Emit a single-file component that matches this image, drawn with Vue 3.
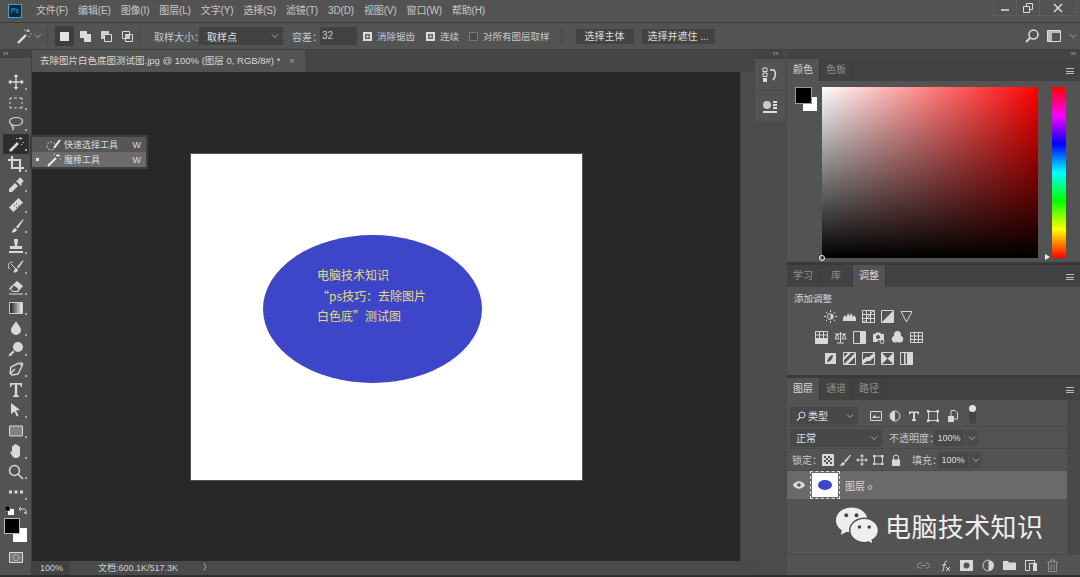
<template>
  <div class="app">
    <!-- menu -->
    <header class="menubar">
      <div class="ps-logo">Ps</div>
      <nav class="menus">
        <span v-for="m in menus" :key="m">{{ m }}</span>
      </nav>
      <div class="win-btns">
        <span class="win-btn"><svg width="12" height="12" viewBox="0 0 12 12"><path d="M2 8h8" stroke="#ddd" stroke-width="1.6" /></svg></span>
        <span class="win-btn"><svg width="12" height="12" viewBox="0 0 12 12"><path d="M1.5 4.5h6v6h-6zM4.5 4.5v-3h6v6h-3" fill="none" stroke="#ddd" /></svg></span>
        <span class="win-btn wide"><svg width="12" height="12" viewBox="0 0 12 12"><path d="M2 2l8 8M10 2l-8 8" stroke="#ddd" stroke-width="1.5" /></svg></span>
      </div>
    </header>

    <!-- options -->
    <section class="options">
      <svg class="opt-wand" width="16" height="16" viewBox="0 0 16 16"><path d="M2 15l8-8" stroke="#ddd" stroke-width="2.4" /><path d="M12 1v3M10 3h4M14.500 6h1M8 2h1M13 8v1" stroke="#ddd" /></svg>
      <svg class="chev" width="8" height="8" viewBox="0 0 8 8"><path d="M1 2.500l3 3 3-3" fill="none" stroke="#aaa" /></svg>
      <i class="sep"></i>
      <div class="mode-btns">
        <span class="mode active"><b class="sq"></b></span>
        <span class="mode"><svg width="13" height="13" viewBox="0 0 13 13"><path d="M1 1h7v3h4v8H5V8H1z" fill="#ddd" /></svg></span>
        <span class="mode"><svg width="13" height="13" viewBox="0 0 13 13"><path d="M1 1h8v3H4v5H1z" fill="#ccc" /><path d="M4.500 4.500h7v7h-7z" fill="none" stroke="#ddd" /></svg></span>
        <span class="mode"><svg width="13" height="13" viewBox="0 0 13 13"><path d="M1.500 1.500h7v7h-7zM4.500 4.500h7v7h-7z" fill="none" stroke="#ddd" /><path d="M4.500 4.500h4v4h-4z" fill="#ccc" /></svg></span>
      </div>
      <i class="sep sep-b"></i>
      <span class="label sample-label">取样大小：</span>
      <span class="select sample-select">取样点<svg class="chev" width="8" height="8" viewBox="0 0 8 8"><path d="M1 2.500l3 3 3-3" fill="none" stroke="#aaa" /></svg></span>
      <span class="label tol-label">容差：</span>
      <span class="num-input">32</span>
      <label class="check first"><b class="box on"></b><span class="chk-text w1">消除锯齿</span></label>
      <label class="check"><b class="box on"></b><span class="chk-text w2">连续</span></label>
      <label class="check"><b class="box"></b><span class="chk-text">对所有图层取样</span></label>
      <i class="sep sep-c"></i>
      <span class="opt-btn subject">选择主体</span>
      <span class="opt-btn mask">选择并遮住 ...</span>
      <div class="opt-right">
        <svg width="16" height="16" viewBox="0 0 16 16"><circle cx="9.500" cy="6.500" r="4.500" fill="none" stroke="#ddd" stroke-width="1.500" /><path d="M6 10l-4 4" stroke="#ddd" stroke-width="1.800" /></svg>
        <svg class="layout-ic" width="14" height="12" viewBox="0 0 14 12"><path d="M.5.500h13v11H.5z" fill="none" stroke="#ddd" /><path d="M1 1h13v2H1zM1 3h4v8H1z" fill="#ddd" opacity=".75" /></svg>
        <svg class="chev" width="8" height="8" viewBox="0 0 8 8"><path d="M1 2.500l3 3 3-3" fill="none" stroke="#aaa" /></svg>
      </div>
    </section>

    <div class="workspace">
      <!-- tools -->
      <aside class="tools">
        <div class="grip">››</div>
        <div class="tool-list">
          <span v-for="t in tools" :key="t.name" class="tool" :class="{ active: t.active }">
            <span v-if="t.gradient" class="gradient-ic"></span>
            <svg v-else width="16" height="16" viewBox="0 0 16 16">
              <path v-if="t.f" :d="t.f" fill="#d8d8d8" :fill-opacity="t.fo || 1" />
              <path v-if="t.s" :d="t.s" fill="none" stroke="#d8d8d8" :stroke-width="t.w || 1" />
            </svg>
            <i class="corner"></i>
          </span>
        </div>
        <div class="swap-row">
          <svg width="9" height="9" viewBox="0 0 9 9"><path d="M3 3h6v6H3z" fill="#fff" /><path d="M0 0h5v5H0z" fill="#000" stroke="#ddd" stroke-width=".5" /></svg>
          <svg width="9" height="9" viewBox="0 0 9 9"><path d="M1 3l2-2M1 3l2 2M1 3h5c1 0 2 1 2 2v3M8 8L6 6M8 8l2-2" fill="none" stroke="#ddd" /></svg>
        </div>
        <div class="swatches">
          <span class="swatch-bg"></span>
          <span class="swatch-fg"></span>
        </div>
        <svg class="quickmask" width="14" height="11" viewBox="0 0 14 11"><path d="M.5.500h13v10H.5z" fill="#777" stroke="#ddd" /><circle cx="7" cy="5.500" r="3" fill="none" stroke="#ddd" stroke-dasharray="1.500 1" /></svg>
      </aside>

      <!-- flyout for the wand slot -->
      <div class="flyout">
        <div class="fly-row">
          <svg width="16" height="14" viewBox="0 0 16 14"><circle cx="5" cy="8" r="4" fill="none" stroke="#ddd" stroke-dasharray="2 1.500" /><path d="M8 10l6-8" stroke="#eee" stroke-width="2" /></svg>
          <span>快速选择工具</span><em>W</em>
        </div>
        <div class="fly-row current">
          <b class="dot"></b>
          <svg width="16" height="14" viewBox="0 0 16 14"><path d="M2 13l8-8" stroke="#eee" stroke-width="2" /><path d="M12 1v3M10 2.500h4M14 6h1M8 1h1" stroke="#eee" /></svg>
          <span>魔棒工具</span><em>W</em>
        </div>
      </div>

      <!-- document -->
      <main class="doc-area">
        <div class="tabbar">
          <div class="doc-tab">去除图片白色底图测试图.jpg @ 100% (图层 0, RGB/8#) * <span class="tab-x">×</span></div>
        </div>
        <div class="canvas-row">
          <div class="canvas">
            <div class="photo">
              <div class="ellipse">
                <p>电脑技术知识</p>
                <p>“ps技巧：去除图片</p>
                <p>白色底”测试图</p>
              </div>
            </div>
          </div>
          <div class="v-scroll"></div>
        </div>
        <footer class="status">
          <span class="zoom-val">100%</span>
          <span class="doc-info">文档:600.1K/517.3K</span>
          <span class="status-arrow">〉</span>
        </footer>
      </main>

      <!-- collapsed strip -->
      <div class="strip">
        <div class="grip right">‹‹</div>
        <div class="strip-btn">
          <svg width="16" height="16" viewBox="0 0 16 16"><path d="M1 1h4v3.500H1zM1 6h4v3.500H1z" fill="none" stroke="#ddd" /><path d="M1 11h4v4H1z" fill="#ddd" /><path d="M8 3h4c2 2 2 7-1 10" fill="none" stroke="#ddd" stroke-width="1.500" /></svg>
        </div>
        <div class="strip-btn">
          <svg width="16" height="14" viewBox="0 0 16 14"><circle cx="5" cy="5" r="4" fill="#ccc" /><path d="M11 1h4v2h-4zM11 4h4v2h-4zM11 7h4v2h-4zM1 11h14v2H1z" fill="#ddd" /></svg>
        </div>
      </div>

      <!-- panels -->
      <div class="dock">
        <div class="grip dock-grip">››</div>

        <section class="panel color-panel">
          <div class="panel-tabs">
            <span class="ptab on">颜色</span><span class="ptab">色板</span>
            <span class="ham"></span>
          </div>
          <div class="color-body">
            <div class="fg-bg">
              <span class="bg-chip"></span>
              <span class="fg-chip"></span>
            </div>
            <div class="sv-field"><i class="sv-pin"></i></div>
            <div class="hue-bar"><i class="hue-pin"></i></div>
          </div>
        </section>

        <section class="panel adjust-panel">
          <div class="panel-tabs">
            <span class="ptab">学习</span><span class="ptab">库</span><span class="ptab on">调整</span>
            <span class="ham"></span>
          </div>
          <div class="adjust-title">添加调整</div>
          <div v-for="(row, i) in adjustRows" :key="i" class="adjust-row" :class="{ wider: i === 1 }">
            <span v-for="(ic, j) in row" :key="j" class="adj-ic">
              <svg width="13" height="13" viewBox="0 0 13 13">
                <path v-if="ic.f" :d="ic.f" fill="#d8d8d8" />
                <path v-if="ic.s" :d="ic.s" fill="none" stroke="#d8d8d8" />
              </svg>
            </span>
          </div>
        </section>

        <section class="panel layers-panel">
          <div class="panel-tabs">
            <span class="ptab on">图层</span><span class="ptab">通道</span><span class="ptab">路径</span>
            <span class="ham"></span>
          </div>
          <div class="layer-main">
            <div class="layer-content">
              <div class="lrow">
                <span class="dark-select filter-sel">
                  <span class="filter-text">
                    <svg width="10" height="10" viewBox="0 0 10 10"><circle cx="6" cy="4" r="3" fill="none" stroke="#ddd" /><path d="M4 6.500L1 9.500" stroke="#ddd" stroke-width="1.200" /></svg>
                    类型
                  </span>
                  <svg class="chev" width="8" height="8" viewBox="0 0 8 8"><path d="M1 2.500l3 3 3-3" fill="none" stroke="#aaa" /></svg>
                </span>
                <div class="filter-icons">
                  <svg v-for="(ic, k) in filterIcons" :key="k" width="12" height="12" viewBox="0 0 12 12"><path :d="ic.f" fill="#d8d8d8" /><path v-if="ic.s" :d="ic.s" fill="none" stroke="#d8d8d8" /></svg>
                </div>
                <span class="toggle"><i></i></span>
              </div>
              <div class="lrow">
                <span class="dark-select blend-sel">正常<svg class="chev" width="8" height="8" viewBox="0 0 8 8"><path d="M1 2.500l3 3 3-3" fill="none" stroke="#aaa" /></svg></span>
                <span class="llabel opacity-label">不透明度：</span>
                <span class="pct">100%</span>
                <span class="pct-chev"><svg width="8" height="8" viewBox="0 0 8 8"><path d="M1 2.500l3 3 3-3" fill="none" stroke="#aaa" /></svg></span>
              </div>
              <div class="lrow">
                <span class="llabel lock-label">锁定：</span>
                <div class="lock-icons">
                  <svg v-for="(ic, k) in lockIcons" :key="k" width="12" height="12" viewBox="0 0 12 12"><path v-if="ic.f" :d="ic.f" fill="#d8d8d8" /><path v-if="ic.s" :d="ic.s" fill="none" stroke="#d8d8d8" /></svg>
                </div>
                <span class="llabel fill-label">填充：</span>
                <span class="pct">100%</span>
                <span class="pct-chev"><svg width="8" height="8" viewBox="0 0 8 8"><path d="M1 2.500l3 3 3-3" fill="none" stroke="#aaa" /></svg></span>
              </div>
              <div class="layer-row">
                <svg class="eye" width="12" height="8" viewBox="0 0 12 8"><path d="M0 4c3-5 9-5 12 0-3 5-9 5-12 0z" fill="#ddd" /><circle cx="6" cy="4" r="1.800" fill="#555" /></svg>
                <span class="thumb"><i></i></span>
                <span class="layer-name">图层 <small>0</small></span>
              </div>
              <div class="layer-empty"></div>
            </div>
            <div class="layer-scroll"></div>
          </div>
          <div class="layers-foot">
            <svg v-for="(ic, k) in footIcons" :key="k" class="foot-ic" :class="{ dim: ic.dim }" width="13" height="13" viewBox="0 0 13 13"><path v-if="ic.f" :d="ic.f" fill="#d8d8d8" /><path v-if="ic.s" :d="ic.s" fill="none" stroke="#d8d8d8" /></svg>
          </div>

          <!-- watermark sits on top of the empty layer area -->
          <div class="watermark">
            <svg width="43" height="38" viewBox="0 0 44 38">
              <path d="M16 0C7 0 0 6 0 13c0 4 2 8 6 10l-1 5 6-3c2 .5 3 .7 5 .7 9 0 16-6 16-13S25 0 16 0z" fill="#eee" />
              <path d="M29 11c-8 0-15 5.500-15 12.500S21 36 29 36c1.500 0 3-.2 4.300-.6L38 38l-1-4.500c4-2.300 6.500-6 6.500-10C43.500 16.500 37 11 29 11z" fill="#eee" stroke="#4f4f4f" stroke-width="1.500" />
              <circle cx="10.500" cy="8" r="2" fill="#444" /><circle cx="21" cy="8" r="2" fill="#444" />
              <circle cx="24" cy="20" r="1.800" fill="#444" /><circle cx="34" cy="20" r="1.800" fill="#444" />
            </svg>
            <span>电脑技术知识</span>
          </div>
        </section>
      </div>
    </div>
    <div class="bottom-line"></div>
  </div>
</template>

<script setup>
const menus = ['文件(F)', '编辑(E)', '图像(I)', '图层(L)', '文字(Y)', '选择(S)', '滤镜(T)', '3D(D)', '视图(V)', '窗口(W)', '帮助(H)']

// f = filled path, s = stroked path, w = stroke width, fo = fill opacity
const tools = [
  { name: 'move', f: 'M8 0l2.500 3h-5zM8 16l-2.500-3h5zM0 8l3-2.500v5zM16 8l-3 2.500v-5z', s: 'M8 2v12M2 8h12', w: 1.4 },
  { name: 'marquee', s: 'M2 3h2M6 3h3M11 3h3v2M14 7v2M14 11v2h-3M9 13H6M4 13H2v-2M2 9V7M2 5V3', w: 1 },
  { name: 'lasso', s: 'M8 2.500c4 0 6.500 1.500 6.500 4s-3 4-6.500 4-6.500-1.500-6.500-4 3-4 6.500-4zM4 10c-1 1 0 2 1 2s1 2-1 3', w: 1.2 },
  { name: 'wand', active: true, s: 'M2 15l8-8', w: 2.6, f: 'M12 1h.8v2.500H12zM10.500 2h4v.8h-4zM14.500 6h1.200v1h-1.200zM8 2h1v1H8zM13 8h1v1h-1z' },
  { name: 'crop', s: 'M4 0v12h12M0 4h12v12', w: 2 },
  { name: 'eyedropper', f: 'M10.500 1.500a2 2 0 0 1 3 0l1 1a2 2 0 0 1 0 3L13 7l1 1-1 1-5-5 1-1 1 1zM7 6l3 3-6 6H1v-3z' },
  { name: 'heal', f: 'M10.500 1L15 5.500 5.500 15 1 10.500zM8 6v1h1V6zm2 2v1h1V8zM6 8v1h1V8zm2 2v1h1v-1z' },
  { name: 'brush', f: 'M15 1l-7 8 2 1.500L15.500 2zM7 10c-2 .5-2 3-4 4.500 3 .5 6-1 6-3z' },
  { name: 'stamp', f: 'M6 1h4v2c0 2-1 3-1 5h5v3H2V8h5c0-2-1-3-1-5zM1 13h14v2H1z' },
  { name: 'history', f: 'M15 1l-6 7 1.500 1.500L15.500 2zM8 9c-2 .5-1 3-3 4 2 1 5 0 5-2.500z', s: 'M3 5l6 6M1.500 10a4 4 0 0 1 3-7', w: 1 },
  { name: 'eraser', f: 'M9 2l6 5-5 6H5L1 9.500zM5 12h4l1.500-2L6 6.500 3 10z', s: 'M1 15h14', w: 1 },
  { name: 'gradient', gradient: true },
  { name: 'blur', f: 'M8 1c2 4 5 6 5 9a5 5 0 0 1-10 0c0-3 3-5 5-9z' },
  { name: 'dodge', f: 'M10 1a5 5 0 1 1 0 10 5 5 0 0 1 0-10zM5 9.500l1.500 1.500L2 15.500 .5 14z' },
  { name: 'pen', s: 'M11 2L3 6 2 12l2 2 6-1 4-8zM2 13l5-5M13 1l2 3', w: 1.4 },
  { name: 'type', f: 'M2 1h12v4h-1c0-1.500-1-2.500-3-2.500H9.200v10.500L11 14v1H5v-1l1.800-1V2.500H6C4 2.500 3 3.500 3 5H2z' },
  { name: 'select', f: 'M3 1l9 7-4 .5 2.500 5-1.800 1L6.500 9.500 3 12z' },
  { name: 'shape', f: 'M1.500 3h13v10h-13z', fo: 0.35, s: 'M1.500 3h13v10h-13z', w: 1 },
  { name: 'hand', f: 'M4 8V3.500a1 1 0 0 1 2 0V7V2a1 1 0 0 1 2 0v5V2.500a1 1 0 0 1 2 0V7V4a1 1 0 0 1 2 0v7c0 3-2 4-4 4-3 0-4-2-5.500-5-.5-1 1-2 2-1z' },
  { name: 'zoom', s: 'M6.500 1.500a5 5 0 1 1 0 10 5 5 0 0 1 0-10zM10 10l5 5', w: 1.5 },
  { name: 'more', f: 'M1 6.500h3v3H1zM6.500 6.500h3v3h-3zM12 6.500h3v3h-3z' }
]

const adjustRows = [
  [
    { f: 'M6.500 3.500a3 3 0 0 1 0 6z', s: 'M6.500 3.500a3 3 0 0 0 0 6M6.500 0v2M6.500 11v2M0 6.500h2M11 6.500h2M2 2l1.300 1.300M9.700 9.700L11 11M2 11l1.300-1.300M9.700 3.300L11 2' },
    { f: 'M0 11V8l2-3 1.500 2L5 3l1.500 3L8 3l2 4 1-2 2 3v3z' },
    { s: 'M.5.500h12v12H.5zM.5 4.500h12M.5 8.500h12M4.500.500v12M8.500.500v12M1 12C6 11 7 2 12 1' },
    { f: 'M1 12L12 1v11z', s: 'M.5.500h12v12H.5z' },
    { s: 'M1 1.500h11L6.500 12z' }
  ],
  [
    { f: 'M1 7h11v5H1z', s: 'M.5.500h12v12H.5zM.5 4h12M4.500.500V7M8.500.500V7' },
    { s: 'M6.500 1v11M3 12h7M1 3h11M3 3L1 8h4zM10 3L8 8h4z' },
    { f: 'M7 1h5v11H7z', s: 'M.5.500h12v12H.5z' },
    { f: 'M1 3h2l1-1.500h4L9 3h3v6H7.500A3 3 0 0 0 5 11H1zM6 4a2 2 0 1 0 0 4 2 2 0 0 0 0-4z', s: 'M10 8.500a2 2 0 1 0 0 4 2 2 0 0 0 0-4z' },
    { f: 'M6.500 0a3.500 3.500 0 0 1 3.300 4.700 3.500 3.500 0 1 1-3.300 6A3.500 3.500 0 1 1 3.200 4.700 3.500 3.500 0 0 1 6.500 0z' },
    { s: 'M.5 1.500h12v10H.5zM.5 5h12M.5 8.500h12M4.500 1.500v10M8.500 1.500v10' }
  ],
  [
    { f: 'M1 1h11v11H1zM9 3C6 3 4 6 3 10c3 0 6-3 6-7z' },
    { f: 'M1 12L12 1v4l-7 7zM1 8l7-7H5L1 5z', s: 'M.5.500h12v12H.5z' },
    { f: 'M1 8l3-3h3l5-4v4L8 9H5l-4 3z', s: 'M.5.500h12v12H.5z' },
    { f: 'M1 1l5.500 5.500L12 1v11L6.500 6.500 1 12z', s: 'M.5.500h12v12H.5z' },
    { f: 'M7 1h5v11H7zM4 1h1.500v11H4z', s: 'M.5.500h12v12H.5z' }
  ]
]

const filterIcons = [
  { f: 'M2 8l2.500-3L7 7.500 8.500 6 10 8z', s: 'M.5 1.500h11v9H.5z' },
  { f: 'M6 1v10A5 5 0 0 1 6 1z', s: 'M6 1a5 5 0 1 0 0 10A5 5 0 0 0 6 1z' },
  { f: 'M1 1.500h10v3h-1c0-1-.5-1.500-2-1.500H7v6l1 .5V11H4v-1.500L5 9V3H4C2.500 3 2 3.500 2 4.500H1z' },
  { f: 'M0 0h2.500v2.500H0zM9.500 0H12v2.500H9.500zM0 9.500h2.500V12H0zM9.500 9.500H12V12H9.500z', s: 'M2 1.500h8M2 10.500h8M1.500 2v8M10.500 2v8' },
  { f: 'M2 6h6v6H2z', s: 'M5 6V.5h4l2.500 2.500v6H8' }
]

const lockIcons = [
  { f: 'M0 0h12v12H0zM2 2v2h2V2zm4 0v2h2V2zM4 4v2h2V4zm4 0v2h2V4zM2 6v2h2V6zm4 0v2h2V6zM4 8v2h2V8zm4 0v2h2V8z' },
  { f: 'M11.500 .5L5 7l1.500 1.500L12 1.500zM4 8c-1.500.5-1 2.500-3.500 3.500 3 1 5.500-.5 5.500-2z' },
  { f: 'M6 0l2 2.500H4zM6 12L4 9.500h4zM0 6l2.500-2v4zM12 6L9.500 8V4z', s: 'M6 2v8M2 6h8' },
  { f: 'M0 1h2.500v2.500H0zM0 8.500h2.500V11H0zM8 1h2.500v2.500H8zM8 8.500h2.500V11H8z', s: 'M2 2h6M2 10h6M1.500 3v5M9.500 3v5' },
  { f: 'M2 5.500h8V12H2z', s: 'M3.500 5.500V3.500a2.500 2.500 0 0 1 5 0v2' }
]

const footIcons = [
  { dim: true, s: 'M5 4H3a2.500 2.500 0 0 0 0 5h2M8 4h2a2.500 2.500 0 0 1 0 5H8M4 6.500h5' },
  { s: 'M3 12c2 0 1.500-2 2-5s1-5 3-5M3 6h4M7 8l4 4M11 8l-4 4' },
  { f: 'M0 1h13v11H0zM6.500 3.500a3 3 0 1 0 0 6 3 3 0 0 0 0-6z' },
  { f: 'M6.500 1a5.500 5.500 0 0 1 0 11z', s: 'M6.500 1a5.500 5.500 0 0 0 0 11' },
  { f: 'M0 2h5l1 1.500h7V11H0z' },
  { f: 'M8 4h4v8H8z', s: 'M.5 1.500h9v3H4.500v7H.5z' },
  { dim: true, s: 'M1 3h11M4.500 3V1h4v2M2.500 3v9.500h8V3M5 5v6M8 5v6' }
]
</script>

<style scoped>
.app {
  width: 1080px;
  height: 577px;
  display: flex;
  flex-direction: column;
  overflow: hidden;
  position: relative;
  background: #535353;
  color: #d0d0d0;
  font-family: "Liberation Sans", "Noto Sans CJK SC", sans-serif;
  font-size: 10px;
}

.menubar {
  height: 22px;
  display: flex;
  align-items: center;
  flex-shrink: 0;
  border-bottom: 1px solid #3a3a3a;
  box-sizing: content-box;
}
.ps-logo {
  width: 12px;
  height: 12px;
  margin-left: 8px;
  background: #0b2b3c;
  border: 1px solid #31a8c8;
  color: #31a8ff;
  font-size: 7px;
  line-height: 12px;
  text-align: center;
}
.menus {
  display: flex;
  align-items: baseline;
  gap: 10px;
  margin-left: 14px;
  color: #c8c8c8;
  letter-spacing: -0.15px;
  line-height: 14px;
}
.win-btns {
  margin-left: auto;
  height: 15px;
  align-self: flex-start;
  display: flex;
  border: 1px solid #5f5f5f;
  border-top: 0;
  margin-right: 3px;
}
.win-btn {
  width: 23px;
  box-sizing: border-box;
  display: flex;
  align-items: center;
  justify-content: center;
  border-right: 1px solid #5f5f5f;
}
.win-btn.wide {
  width: 36px;
  border-right: 0;
}

.options {
  height: 26px;
  display: flex;
  align-items: center;
  flex-shrink: 0;
  border-bottom: 1px solid #3f3f3f;
  color: #c8c8c8;
}
.label { white-space: nowrap; }
.opt-wand { margin-left: 16px; }
.chev { flex-shrink: 0; }
.options > .chev { margin-left: 2px; }
.sep {
  width: 1px;
  height: 18px;
  margin-left: 5px;
  background: #474747;
}
.mode-btns {
  display: flex;
  margin-left: 7px;
  gap: 2px;
}
.mode {
  width: 19px;
  height: 20px;
  display: flex;
  align-items: center;
  justify-content: center;
}
.mode.active { background: #3d3d3d; }
.sq {
  width: 9px;
  height: 9px;
  background: #e4e4e4;
}
.sep-b { margin-left: 2px; }
.sample-label { margin-left: 14px; width: 45px; }
.select {
  display: flex;
  align-items: center;
  justify-content: space-between;
  box-sizing: border-box;
  height: 18px;
  background: #424242;
  padding: 0 4px 0 8px;
}
.sample-select { width: 84px; color: #e0e0e0; }
.tol-label { margin-left: 9px; width: 28px; }
.num-input {
  width: 37px;
  height: 18px;
  background: #424242;
  line-height: 18px;
  padding-left: 2px;
  box-sizing: border-box;
}
.check {
  display: flex;
  align-items: center;
  gap: 5px;
  margin-left: 11px;
}
.check.first { margin-left: 6px; }
.chk-text {
  font-size: 9.500px;
  white-space: nowrap;
}
.chk-text.w1 { width: 38px; }
.chk-text.w2 { width: 18px; }
.box {
  width: 9px;
  height: 9px;
  box-sizing: border-box;
  border: 1px solid #777;
  background: #4a4a4a;
}
.box.on {
  background: #dcdcdc;
  border: 2px solid #dcdcdc;
  box-shadow: inset 0 0 0 1.5px #666;
}
.sep-c { margin-left: 11px; }
.opt-btn {
  height: 15px;
  line-height: 15px;
  background: #434343;
  text-align: center;
  color: #dcdcdc;
  white-space: nowrap;
}
.subject { width: 58px; margin-left: 14px; }
.mask { width: 73px; margin-left: 8px; }
.opt-right {
  margin-left: auto;
  margin-right: 3px;
  display: flex;
  align-items: center;
}
.layout-ic { margin-left: 7px; }
.opt-right .chev { margin-left: 8px; }

.workspace {
  flex: 1;
  min-height: 0;
  display: flex;
  position: relative;
}

.tools {
  width: 32px;
  flex-shrink: 0;
  display: flex;
  flex-direction: column;
  align-items: center;
  background: #535353;
  border-right: 1px solid #404040;
  box-sizing: border-box;
}
.grip {
  height: 8px;
  width: 100%;
  line-height: 7px;
  font-size: 8px;
  color: #bbb;
  padding-left: 3px;
  background: #434343;
  box-sizing: border-box;
}
.tool-list {
  margin-top: 14px;
  width: 100%;
  display: flex;
  flex-direction: column;
  align-items: center;
}
.tool {
  position: relative;
  width: 26px;
  height: 20.500px;
  display: flex;
  align-items: center;
  justify-content: center;
}
.tool.active { background: #2e2e2e; }
.corner {
  position: absolute;
  right: 2px;
  bottom: 3px;
  width: 2px;
  height: 2px;
  background: #aaa;
}
.gradient-ic {
  width: 14px;
  height: 12px;
  background: linear-gradient(to right, #222, #eee);
  border: 1px solid #ccc;
  box-sizing: border-box;
}
.swap-row {
  width: 22px;
  display: flex;
  justify-content: space-between;
  margin-top: 3px;
}
.swatches {
  position: relative;
  width: 23px;
  height: 24px;
  margin-top: 3px;
}
.swatch-bg {
  position: absolute;
  right: 0;
  bottom: 0;
  width: 14px;
  height: 14px;
  background: #fff;
}
.swatch-fg {
  position: absolute;
  left: 0;
  top: 0;
  width: 14px;
  height: 14px;
  background: #000;
  border: 1px solid #bbb;
}
.quickmask { margin-top: 10px; }

.flyout {
  position: absolute;
  left: 30px;
  top: 85px;
  width: 118px;
  height: 34px;
  padding: 2px;
  box-sizing: border-box;
  background: #3c3c3c;
  z-index: 2;
  color: #ddd;
  font-size: 9px;
}
.fly-row {
  height: 15px;
  display: flex;
  align-items: center;
  padding: 0 5px 0 14px;
  background: #565656;
  position: relative;
}
.fly-row.current { background: #6b6b6b; }
.fly-row span { margin-left: 2px; }
.fly-row em {
  margin-left: auto;
  font-style: normal;
}
.dot {
  position: absolute;
  left: 4px;
  top: 6px;
  width: 3px;
  height: 3px;
  background: #eee;
}

.doc-area {
  width: 723px;
  flex-shrink: 0;
  display: flex;
  flex-direction: column;
}
.tabbar {
  height: 22px;
  flex-shrink: 0;
  background: #454545;
  display: flex;
}
.doc-tab {
  width: 273px;
  padding-left: 8px;
  box-sizing: border-box;
  background: #535353;
  line-height: 22px;
  white-space: nowrap;
  color: #d8d8d8;
  font-size: 9.500px;
}
.tab-x {
  margin-left: 6px;
  color: #aaa;
}
.canvas-row {
  flex: 1;
  min-height: 0;
  display: flex;
}
.canvas {
  flex: 1;
  background: #282828;
  padding: 82px 0 0 159px;
}
.photo {
  width: 391px;
  height: 326px;
  background: #fff;
  display: flex;
  align-items: center;
  justify-content: center;
  padding: 0 28px 16px 0;
  box-sizing: border-box;
  box-shadow: 0 0 0 1px #555;
}
.ellipse {
  width: 219px;
  height: 148px;
  border-radius: 50%;
  background: #3d46c8;
  box-sizing: border-box;
  padding: 30px 0 0 54px;
  color: #e8dc74;
  font-family: "Noto Sans CJK SC", sans-serif;
  font-size: 12px;
  line-height: 20.500px;
}
.ellipse p { margin: 0; white-space: nowrap; }
.v-scroll {
  width: 15px;
  flex-shrink: 0;
  background: #4b4b4b;
  border-left: 1px solid #444;
  box-sizing: border-box;
}
.status {
  height: 14px;
  flex-shrink: 0;
  display: flex;
  align-items: center;
  background: #4a4a4a;
  line-height: 14px;
  font-size: 9px;
}
.zoom-val {
  width: 38px;
  padding-left: 8px;
  background: #424242;
  box-sizing: border-box;
}
.doc-info {
  margin-left: 28px;
  width: 105px;
}
.status-arrow { font-size: 8px; }

.strip {
  width: 32px;
  flex-shrink: 0;
  box-sizing: border-box;
  padding-right: 2px;
  background: #4b4b4b;
}
.grip.right {
  padding-left: 18px;
  height: 9px;
}
.strip-btn {
  height: 31px;
  margin-bottom: 1px;
  background: #535353;
  display: flex;
  align-items: center;
  justify-content: center;
}

.dock {
  flex: 1;
  min-width: 0;
  display: flex;
  flex-direction: column;
  background: #3a3a3a;
}
.dock-grip {
  height: 9px;
  text-align: right;
  padding-right: 4px;
}
.panel {
  background: #535353;
  display: flex;
  flex-direction: column;
}
.panel-tabs {
  height: 22px;
  flex-shrink: 0;
  display: flex;
  align-items: stretch;
  background: #424242;
  color: #8f8f8f;
}
.ptab {
  width: 33px;
  box-sizing: border-box;
  line-height: 22px;
  text-align: center;
  border-right: 1px solid #3c3c3c;
}
.ptab.on {
  background: #535353;
  color: #d8d8d8;
}
.ham {
  margin: 9px 6px 0 auto;
  width: 8px;
  height: 4px;
  border-top: 1px solid #bbb;
  border-bottom: 1px solid #bbb;
  background: linear-gradient(#bbb, #bbb) center / 100% 1px no-repeat;
}

.color-panel { height: 203px; }
.color-body {
  flex: 1;
  display: flex;
  align-items: flex-start;
  padding: 6px 0 0 8px;
}
.fg-bg {
  position: relative;
  width: 22px;
  height: 24px;
  flex-shrink: 0;
}
.bg-chip {
  position: absolute;
  right: 0;
  bottom: 0;
  width: 14px;
  height: 14px;
  background: #fff;
}
.fg-chip {
  position: absolute;
  left: 0;
  top: 0;
  width: 15px;
  height: 15px;
  background: #000;
  border: 1px solid #9a9a9a;
}
.sv-field {
  position: relative;
  width: 216px;
  height: 171px;
  margin-left: 5px;
  background:
    linear-gradient(to bottom, rgba(0, 0, 0, 0), #000),
    linear-gradient(to right, #fff, #f00);
}
.sv-pin {
  position: absolute;
  left: -3px;
  bottom: -3px;
  width: 6px;
  height: 6px;
  border-radius: 50%;
  border: 1px solid #fff;
  box-sizing: border-box;
}
.hue-bar {
  position: relative;
  width: 14px;
  height: 171px;
  margin-left: 14px;
  background: linear-gradient(to bottom, #f00, #f0f, #00f, #0ff, #0f0, #ff0, #f00);
}
.hue-pin {
  position: absolute;
  left: -7px;
  bottom: -2px;
  border-left: 5px solid #eee;
  border-top: 3px solid transparent;
  border-bottom: 3px solid transparent;
}

.adjust-panel {
  height: 110px;
  margin-top: 3px;
}
.adjust-title {
  margin: 5px 0 0 7px;
  color: #d8d8d8;
  line-height: 14px;
  font-size: 9.500px;
}
.adjust-row {
  height: 21px;
  padding-left: 34px;
  display: flex;
  align-items: center;
}
.adjust-row.wider { padding-left: 25px; }
.adj-ic {
  width: 19px;
  display: flex;
  justify-content: center;
}

.layers-panel {
  flex: 1;
  min-height: 0;
  margin-top: 3px;
  position: relative;
}
.layer-main {
  flex: 1;
  min-height: 0;
  display: flex;
}
.layer-content {
  flex: 1;
  min-width: 0;
  display: flex;
  flex-direction: column;
  padding-top: 5px;
}
.layer-scroll {
  width: 13px;
  flex-shrink: 0;
  background: #4a4a4a;
}
.lrow {
  height: 22px;
  flex-shrink: 0;
  display: flex;
  align-items: center;
  padding-left: 3px;
  color: #c8c8c8;
  border-bottom: 1px solid #4b4b4b;
  box-sizing: border-box;
}
.dark-select {
  height: 18px;
  background: #484848;
  border-radius: 2px;
  display: flex;
  align-items: center;
  justify-content: space-between;
  padding: 0 4px 0 6px;
  box-sizing: border-box;
  color: #e0e0e0;
}
.filter-sel { width: 68px; }
.filter-text {
  display: flex;
  align-items: center;
  gap: 2px;
}
.blend-sel { width: 92px; }
.filter-icons {
  display: flex;
  gap: 7px;
  margin-left: 12px;
}
.toggle {
  width: 7px;
  height: 16px;
  margin-left: 11px;
  border-radius: 4px;
  background: #444;
  position: relative;
}
.toggle i {
  position: absolute;
  left: 0;
  top: -3px;
  width: 7px;
  height: 7px;
  border-radius: 50%;
  background: #e4e4e4;
}
.llabel { white-space: nowrap; }
.opacity-label { margin-left: 7px; width: 45px; }
.pct {
  width: 30px;
  height: 16px;
  line-height: 16px;
  background: #484848;
  text-align: center;
  font-size: 9px;
  color: #ddd;
}
.pct-chev {
  width: 13px;
  height: 16px;
  margin-left: 1px;
  display: flex;
  align-items: center;
  justify-content: center;
  background: #4b4b4b;
}
.lock-label { margin-left: 2px; width: 30px; }
.lock-icons {
  display: flex;
  gap: 5px;
}
.fill-label { margin-left: 10px; width: 26px; }
.layer-row {
  height: 28px;
  flex-shrink: 0;
  display: flex;
  align-items: center;
  background: #6a6a6a;
}
.eye { margin-left: 6px; }
.thumb {
  width: 26px;
  height: 24px;
  margin-left: 7px;
  background: #fff;
  outline: 1px dashed #ddd;
  outline-offset: 1px;
  display: flex;
  align-items: center;
  justify-content: center;
}
.thumb i {
  width: 14px;
  height: 10px;
  border-radius: 50%;
  background: #3d46c8;
}
.layer-name {
  margin-left: 7px;
  color: #d8d8d8;
}
.layer-name small { font-size: 8px; }
.layer-empty { flex: 1; }
.layers-foot {
  height: 20px;
  flex-shrink: 0;
  display: flex;
  align-items: center;
  justify-content: flex-end;
  gap: 8.500px;
  padding-right: 21px;
  background: #535353;
  border-top: 1px solid #484848;
}
.foot-ic.dim { opacity: 0.45; }

.watermark {
  position: absolute;
  left: 49px;
  top: 128px;
  display: flex;
  align-items: center;
  gap: 6px;
  color: #efefef;
  font-family: "Noto Sans CJK SC", sans-serif;
  font-size: 26px;
  letter-spacing: 0.4px;
  white-space: nowrap;
  line-height: 40px;
}

.bottom-line {
  height: 2px;
  flex-shrink: 0;
  background: #2e2e2e;
}
</style>

<style>
body {
  margin: 0;
  background: #535353;
}
</style>
